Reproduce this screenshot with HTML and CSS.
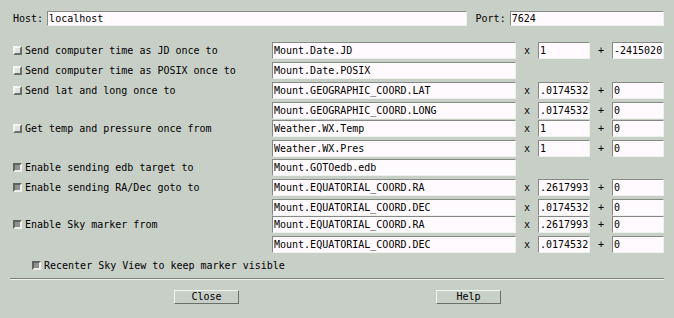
FILE: index.html
```html
<!DOCTYPE html>
<html lang="en">
<head>
    <meta charset="UTF-8">
    <title>INDI Panel Setup</title>
    <link rel="stylesheet" href="styles.css">
</head>
<body>
    <div class="dialog">
        <div class="host-row">
            <span class="lbl">Host:</span>
            <span class="field host-field">localhost</span>
            <span class="lbl port-lbl">Port:</span>
            <span class="field port-field">7624</span>
        </div>

        <div class="props">
            <div class="name"><span class="toggle"></span>Send computer time as JD once to</div>
            <div class="field prop">Mount.Date.JD</div>
            <div class="op">x</div>
            <div class="field">1</div>
            <div class="op">+</div>
            <div class="field">-2415020</div>

            <div class="name"><span class="toggle"></span>Send computer time as POSIX once to</div>
            <div class="field prop">Mount.Date.POSIX</div>

            <div class="name"><span class="toggle"></span>Send lat and long once to</div>
            <div class="field prop">Mount.GEOGRAPHIC_COORD.LAT</div>
            <div class="op">x</div>
            <div class="field">.0174532</div>
            <div class="op">+</div>
            <div class="field">0</div>

            <div class="field prop">Mount.GEOGRAPHIC_COORD.LONG</div>
            <div class="op">x</div>
            <div class="field">.0174532</div>
            <div class="op">+</div>
            <div class="field">0</div>

            <div class="name"><span class="toggle"></span>Get temp and pressure once from</div>
            <div class="field prop">Weather.WX.Temp</div>
            <div class="op">x</div>
            <div class="field">1</div>
            <div class="op">+</div>
            <div class="field">0</div>

            <div class="field prop">Weather.WX.Pres</div>
            <div class="op">x</div>
            <div class="field">1</div>
            <div class="op">+</div>
            <div class="field">0</div>

            <div class="name"><span class="toggle on"></span>Enable sending edb target to</div>
            <div class="field prop">Mount.GOTOedb.edb</div>

            <div class="name"><span class="toggle on"></span>Enable sending RA/Dec goto to</div>
            <div class="field prop">Mount.EQUATORIAL_COORD.RA</div>
            <div class="op">x</div>
            <div class="field">.2617993</div>
            <div class="op">+</div>
            <div class="field">0</div>

            <div class="field prop">Mount.EQUATORIAL_COORD.DEC</div>
            <div class="op">x</div>
            <div class="field">.0174532</div>
            <div class="op">+</div>
            <div class="field">0</div>

            <div class="name"><span class="toggle on"></span>Enable Sky marker from</div>
            <div class="field prop">Mount.EQUATORIAL_COORD.RA</div>
            <div class="op">x</div>
            <div class="field">.2617993</div>
            <div class="op">+</div>
            <div class="field">0</div>

            <div class="field prop">Mount.EQUATORIAL_COORD.DEC</div>
            <div class="op">x</div>
            <div class="field">.0174532</div>
            <div class="op">+</div>
            <div class="field">0</div>
        </div>

        <div class="recenter"><span class="toggle on"></span>Recenter Sky View to keep marker visible</div>

        <div class="separator"></div>

        <div class="buttons">
            <button class="btn">Close</button>
            <button class="btn">Help</button>
        </div>
    </div>
</body>
</html>
```

FILE: styles.css
```css
* {
    box-sizing: border-box;
}
body {
    margin: 0;
    background-color: #c8cfc7;
    color: #000;
    font-family: 'DejaVu Sans Mono', 'Liberation Mono', monospace;
    font-size: 10px;
}
.dialog {
    width: 674px;
    height: 318px;
    padding: 11px 10px 0 13px;
}
.field {
    height: 17px;
    line-height: 15px;
    padding-left: 1px;
    background-color: #fffafd;
    border: 1px solid;
    border-color: #858b84 #eef1ed #eef1ed #858b84;
    white-space: nowrap;
    overflow: hidden;
}
.host-row {
    display: flex;
    align-items: center;
    height: 15px;
}
.host-row .field {
    height: 15px;
    line-height: 13px;
}
.host-field {
    width: 424px;
    margin-left: 4px;
}
.port-lbl {
    margin-left: 9px;
}
.port-field {
    width: 156px;
    margin-left: 4px;
}
.props {
    margin-top: 16px;
    display: grid;
    grid-template-columns: 259px 244px 22px 52px 22px 52px;
    grid-template-rows: 20px 20px 20px 18px 20px 19px 20px 20px 17px 20px 17px;
    align-items: start;
}
.name {
    grid-column: 1;
    display: flex;
    align-items: center;
    height: 17px;
    white-space: nowrap;
}
.prop {
    grid-column: 2;
}
.op {
    height: 17px;
    line-height: 18px;
    text-align: center;
}
.toggle {
    display: inline-block;
    width: 9px;
    height: 9px;
    margin-right: 3px;
    background-color: #e1e3e0;
    border: 2px solid;
    border-color: #f4f5f3 #6b6f6a #6b6f6a #f4f5f3;
}
.toggle.on {
    background-color: #8e918d;
    border-color: #5f635e #eceeeb #eceeeb #5f635e;
}
.recenter {
    display: flex;
    align-items: center;
    height: 17px;
    margin-top: 4px;
    margin-left: 19px;
}
.separator {
    margin: 4px 0 0 -3px;
    height: 2px;
    border-top: 1px solid #7c8279;
    border-bottom: 1px solid #eef1ed;
}
.buttons {
    display: flex;
    gap: 197px;
    margin-top: 10px;
    padding-left: 161px;
}
.btn {
    width: 65px;
    height: 14px;
    padding: 0;
    font-family: inherit;
    font-size: 10px;
    line-height: 10px;
    color: #000;
    background-color: #c8cfc7;
    border: 1px solid;
    border-color: #f2f4f1 #6b6f6a #6b6f6a #f2f4f1;
}
```
